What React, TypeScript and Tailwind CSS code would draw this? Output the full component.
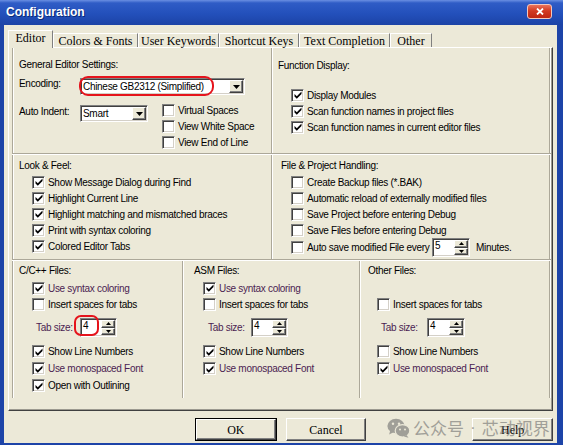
import React from "react";

const PURPLE = "text-[#4b1d52]";

function CheckMark() {
  return (
    <svg width="8" height="8" viewBox="0 0 8 8" className="block">
      <path d="M0.5 3 L2.8 5.3 L7.5 0.6 L7.5 3 L2.8 7.7 L0.5 5.4 Z" fill="#000" />
    </svg>
  );
}

function CheckBox({ checked }: { checked?: boolean }) {
  return (
    <span className="w-[13px] h-[13px] shrink-0 bg-white border border-t-[#808080] border-l-[#808080] border-b-white border-r-white shadow-[inset_1px_1px_0_#404040,inset_-1px_-1px_0_#D4D0C8] flex items-center justify-center">
      {checked && <CheckMark />}
    </span>
  );
}

function Item({
  checked,
  label,
  className = "h-[16px]",
  labelClass = "",
}: {
  checked?: boolean;
  label: string;
  className?: string;
  labelClass?: string;
}) {
  return (
    <div className={`flex items-center ${className}`}>
      <CheckBox checked={checked} />
      <span className={`ml-[3px] whitespace-nowrap ${labelClass}`}>{label}</span>
    </div>
  );
}

function RaisedBtn({ className, children }: { className?: string; children?: React.ReactNode }) {
  return (
    <div
      className={`bg-[#ECE9D8] border border-t-white border-l-white border-b-[#404040] border-r-[#404040] shadow-[inset_-1px_-1px_0_#808080] flex items-center justify-center ${className ?? ""}`}
    >
      {children}
    </div>
  );
}

function Combo({ className, text }: { className: string; text: string }) {
  return (
    <div
      className={`flex h-[17px] bg-white border border-t-[#808080] border-l-[#808080] border-b-white border-r-white shadow-[inset_1px_1px_0_#404040,inset_-1px_-1px_0_#D4D0C8] p-[1px] ${className}`}
    >
      <span className="flex-1 pl-[1px] leading-[13px] whitespace-nowrap overflow-hidden">{text}</span>
      <RaisedBtn className="w-[14px] h-full">
        <svg width="7" height="4" viewBox="0 0 7 4" className="block">
          <path d="M0 0 H7 L3.5 4 Z" fill="#000" />
        </svg>
      </RaisedBtn>
    </div>
  );
}

function Spin({ className, value }: { className: string; value: string }) {
  return (
    <div
      className={`flex h-[19px] bg-white border border-t-[#808080] border-l-[#808080] border-b-white border-r-white shadow-[inset_1px_1px_0_#404040,inset_-1px_-1px_0_#D4D0C8] p-[1px] ${className}`}
    >
      <span className="flex-1 pl-[1px] leading-[12px]">{value}</span>
      <div className="w-[14px] h-full flex flex-col">
        <RaisedBtn className="flex-1">
          <svg width="5" height="3" viewBox="0 0 5 3" className="block">
            <path d="M0 3 H5 L2.5 0 Z" fill="#000" />
          </svg>
        </RaisedBtn>
        <RaisedBtn className="flex-1">
          <svg width="5" height="3" viewBox="0 0 5 3" className="block">
            <path d="M0 0 H5 L2.5 3 Z" fill="#000" />
          </svg>
        </RaisedBtn>
      </div>
    </div>
  );
}

function VLine() {
  return <div className="w-[2px] shrink-0 self-stretch border-l border-l-[#ACA899] bg-white" />;
}

function HLine() {
  return <div className="h-[2px] shrink-0 border-t border-t-[#ACA899] bg-white" />;
}

function Tab({ className, children }: { className: string; children: React.ReactNode }) {
  return (
    <div
      className={`h-[14px] leading-[14px] text-center whitespace-nowrap border-t border-l border-t-white border-l-white border-r border-r-[#808080] bg-[#ECE9D8] ${className}`}
    >
      {children}
    </div>
  );
}

function TabSizeRow({
  labelClass,
  spinClass,
  oval,
}: {
  labelClass: string;
  spinClass: string;
  oval?: boolean;
}) {
  return (
    <div className="flex items-center h-[19px] mt-[6px]">
      <span className={`whitespace-nowrap ${PURPLE} ${labelClass}`}>Tab size:</span>
      <div className="relative">
        <Spin className={spinClass} value="4" />
        {oval && (
          <div className="absolute left-[-6px] top-[-3px] w-[25px] h-[21px] rounded-[7px] border-2 border-[#e5141c]" />
        )}
      </div>
    </div>
  );
}

function WeChatIcon() {
  return (
    <svg width="23" height="20" viewBox="0 0 23 20" className="block">
      <ellipse cx="9" cy="8" rx="8.6" ry="7.2" fill="#6f6f6f" />
      <path d="M3.2 12.5 L2.2 16.5 L7 14 Z" fill="#6f6f6f" />
      <ellipse cx="15.5" cy="12.8" rx="7.3" ry="6.2" fill="#6f6f6f" stroke="#ECE9D8" strokeWidth="1.2" />
      <path d="M19.5 17 L21.5 19.8 L16.8 18.4 Z" fill="#6f6f6f" />
      <circle cx="6" cy="5.8" r="1.2" fill="#ECE9D8" />
      <circle cx="12" cy="5.8" r="1.2" fill="#ECE9D8" />
      <circle cx="13" cy="11.5" r="1" fill="#ECE9D8" />
      <circle cx="18" cy="11.5" r="1" fill="#ECE9D8" />
    </svg>
  );
}

export default function App() {
  return (
    <div className="relative w-[563px] h-[445px] overflow-hidden flex flex-col bg-[#1d44a8] font-['Liberation_Sans',Arial,sans-serif] text-[10px] tracking-[-0.3px] text-black">
      {/* Title bar */}
      <div className="h-[25px] shrink-0 flex items-start justify-between pl-[6px] pr-[11px] bg-[linear-gradient(to_bottom,#6a8fe2_0%,#2f5cc6_12%,#2350bb_55%,#1c43a6_100%)]">
        <span className="mt-[5px] text-white font-bold text-[12px] tracking-[0px] leading-[15px] [text-shadow:1px_1px_0_#0b2a78]">
          Configuration
        </span>
        <div className="mt-[4px] w-[25px] h-[15px] rounded-[3px] border border-[#f3c7bd] bg-[linear-gradient(to_bottom,#e9735c_0%,#d23a22_45%,#bf2612_100%)] flex items-center justify-center">
          <svg width="8" height="7" viewBox="0 0 8 7" className="block">
            <path d="M1 0.5 L7 6.5 M7 0.5 L1 6.5" stroke="#fff" strokeWidth="1.8" />
          </svg>
        </div>
      </div>

      {/* Body */}
      <div className="flex-1 flex flex-col pl-[4px] pr-[6px] pb-[2px]">
        <div className="flex-1 bg-[#ECE9D8] flex flex-col px-[4px] pt-[5px]">
          {/* Tabs */}
          <div className="relative z-10 flex items-end h-[17px] font-['Liberation_Serif',serif] text-[12px] tracking-[0px]">
            <div className="w-[45px] h-[18px] -mb-px leading-[14px] text-center border-t border-l border-t-white border-l-white border-r border-r-[#808080] bg-[#ECE9D8]">
              Editor
            </div>
            <Tab className="w-[85px]">Colors &amp; Fonts</Tab>
            <Tab className="w-[81px]">User Keywords</Tab>
            <Tab className="w-[80px]">Shortcut Keys</Tab>
            <Tab className="w-[91px]">Text Completion</Tab>
            <Tab className="w-[42px]">Other</Tab>
          </div>

          {/* Panel */}
          <div className="h-[364px] shrink-0 flex flex-col border border-t-white border-l-white border-r-[#404040] border-b-[#404040] shadow-[inset_-1px_-1px_0_#9c9a90] pl-[3px] pr-[1px]">
            {/* Row 1 */}
            <div className="h-[105px] shrink-0 flex">
              <VLine />
              <div className="w-[257px] shrink-0 pl-[5px] pt-[8px] flex flex-col">
                <div className="h-[16px] flex items-center">General Editor Settings:</div>
                <div className="mt-[6px] flex items-start h-[17px]">
                  <span className="w-[61px] shrink-0 leading-[12px]">Encoding:</span>
                  <div className="relative">
                    <Combo className="w-[165px]" text="Chinese GB2312 (Simplified)" />
                    <div className="absolute left-[-1px] top-[-2px] w-[135px] h-[20px] rounded-[9px] border-2 border-[#e5141c]" />
                  </div>
                </div>
                <div className="mt-[10px] flex items-start">
                  <span className="w-[61px] shrink-0 leading-[12px] pt-[1px]">Auto Indent:</span>
                  <Combo className="w-[68px]" text="Smart" />
                  <div className="ml-[14px] -mt-[3px] flex flex-col">
                    <Item label="Virtual Spaces" />
                    <Item label="View White Space" />
                    <Item label="View End of Line" />
                  </div>
                </div>
              </div>
              <VLine />
              <div className="flex-1 pl-[5px] pt-[9px] flex flex-col">
                <div className="h-[16px] flex items-center">Function Display:</div>
                <div className="ml-[13px] mt-[14px] flex flex-col">
                  <Item checked label="Display Modules" />
                  <Item checked label="Scan function names in project files" />
                  <Item checked label="Scan function names in current editor files" />
                </div>
              </div>
              <VLine />
            </div>
            <HLine />

            {/* Row 2 */}
            <div className="h-[104px] shrink-0 flex">
              <VLine />
              <div className="w-[257px] shrink-0 pl-[5px] pt-[2px] flex flex-col">
                <div className="h-[16px] flex items-center">Look &amp; Feel:</div>
                <div className="ml-[13px] mt-[1px] flex flex-col">
                  <Item checked label="Show Message Dialog during Find" />
                  <Item checked label="Highlight Current Line" />
                  <Item checked label="Highlight matching and mismatched braces" />
                  <Item checked label="Print with syntax coloring" />
                  <Item checked label="Colored Editor Tabs" />
                </div>
              </div>
              <VLine />
              <div className="flex-1 pl-[8px] pt-[2px] flex flex-col">
                <div className="h-[16px] flex items-center">File &amp; Project Handling:</div>
                <div className="ml-[10px] mt-[1px] flex flex-col">
                  <Item label="Create Backup files (*.BAK)" />
                  <Item label="Automatic reload of externally modified files" />
                  <Item label="Save Project before entering Debug" />
                  <Item label="Save Files before entering Debug" />
                  <div className="flex items-center h-[19px]">
                    <CheckBox />
                    <span className="ml-[3px] w-[123px] shrink-0 whitespace-nowrap">Auto save modified File every</span>
                    <Spin className="w-[38px] ml-[2px]" value="5" />
                    <span className="ml-[6px]">Minutes.</span>
                  </div>
                </div>
              </div>
              <VLine />
            </div>
            <HLine />

            {/* Row 3 */}
            <div className="h-[137px] shrink-0 flex">
              <VLine />
              <div className="w-[168px] shrink-0 pl-[5px] pt-[1px] flex flex-col">
                <div className="h-[16px] flex items-center">C/C++ Files:</div>
                <div className="ml-[13px] mt-[2px] flex flex-col">
                  <Item checked label="Use syntax coloring" labelClass={PURPLE} />
                  <Item label="Insert spaces for tabs" />
                  <TabSizeRow labelClass="ml-[4px] w-[44px]" spinClass="w-[37px]" oval />
                  <div className="mt-[6px] flex flex-col">
                    <Item checked label="Show Line Numbers" className="h-[17px]" />
                    <Item checked label="Use monospaced Font" className="h-[17px]" labelClass={PURPLE} />
                    <Item checked label="Open with Outlining" className="h-[17px]" />
                  </div>
                </div>
              </div>
              <VLine />
              <div className="w-[175px] shrink-0 pl-[10px] pt-[1px] flex flex-col">
                <div className="h-[16px] flex items-center">ASM Files:</div>
                <div className="ml-[9px] mt-[2px] flex flex-col">
                  <Item checked label="Use syntax coloring" labelClass={PURPLE} />
                  <Item label="Insert spaces for tabs" />
                  <TabSizeRow labelClass="ml-[5px] w-[43px]" spinClass="w-[37px]" />
                  <div className="mt-[6px] flex flex-col">
                    <Item checked label="Show Line Numbers" className="h-[17px]" />
                    <Item checked label="Use monospaced Font" className="h-[17px]" labelClass={PURPLE} />
                  </div>
                </div>
              </div>
              <VLine />
              <div className="flex-1 pl-[7px] pt-[1px] flex flex-col">
                <div className="h-[16px] flex items-center">Other Files:</div>
                <div className="ml-[9px] mt-[2px] flex flex-col">
                  <div className="h-[16px]" />
                  <Item label="Insert spaces for tabs" />
                  <TabSizeRow labelClass="ml-[4px] w-[46px]" spinClass="w-[38px]" />
                  <div className="mt-[6px] flex flex-col">
                    <Item label="Show Line Numbers" className="h-[17px]" />
                    <Item checked label="Use monospaced Font" className="h-[17px]" labelClass={PURPLE} />
                  </div>
                </div>
              </div>
              <VLine />
            </div>
          </div>

          {/* Buttons */}
          <div className="mt-[7px] h-[23px] shrink-0 flex pl-[187px] font-['Liberation_Serif',serif] text-[12px] tracking-[0px]">
            <div className="w-[82px] h-full border border-black">
              <RaisedBtn className="w-full h-full">OK</RaisedBtn>
            </div>
            <RaisedBtn className="ml-[9px] w-[81px] h-full">Cancel</RaisedBtn>
            <RaisedBtn className="ml-[106px] w-[81px] h-full">Help</RaisedBtn>
          </div>
        </div>
      </div>

      {/* Watermark overlay */}
      <div className="absolute left-[387px] top-[418px] flex items-center whitespace-nowrap opacity-60 text-[#6f6f6f] font-['Noto_Sans_CJK_SC','Noto_Sans',sans-serif] text-[17px] leading-[20px] tracking-[0px] pointer-events-none">
        <WeChatIcon />
        <span className="ml-[3px]">公众号</span>
        <span className="mx-[6px] font-['Liberation_Sans',sans-serif]">·</span>
        <span>芯动视界</span>
      </div>
    </div>
  );
}
